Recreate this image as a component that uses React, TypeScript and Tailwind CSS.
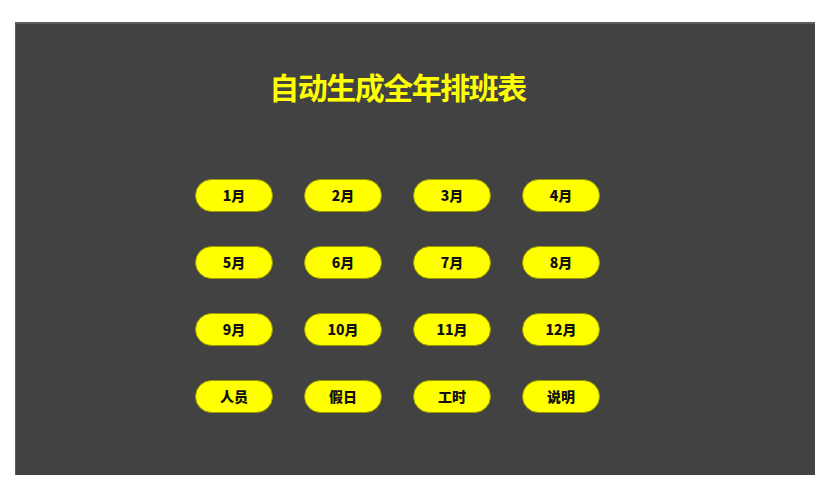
const items = [
  '1月', '2月', '3月', '4月',
  '5月', '6月', '7月', '8月',
  '9月', '10月', '11月', '12月',
  '人员', '假日', '工时', '说明',
]

export default function App() {
  return (
    <div
      className="min-h-[497px] w-full bg-white pt-[22px] pl-[15px]"
      style={{ fontFamily: '"Noto Sans CJK SC", "Noto Sans", sans-serif' }}
    >
      <div className="flex h-[453px] w-[800px] flex-col border-t-2 border-l border-[#5e5e5e] bg-[#424242]">
        <div className="mt-[44px] flex justify-center pr-[36px]">
          <h1 className="text-[30px] font-bold leading-[36px] tracking-[-1.5px] text-[#ffff00]">
            自动生成全年排班表
          </h1>
        </div>
        <div className="mt-[75px] ml-[179px] grid w-fit grid-cols-4 gap-x-[31px] gap-y-[34px]">
          {items.map((label) => (
            <button
              key={label}
              className="flex h-[33px] w-[78px] items-center justify-center rounded-full border border-[#9a9a00] bg-[#ffff00] text-[14px] font-black text-[#111]"
            >
              {label}
            </button>
          ))}
        </div>
      </div>
    </div>
  )
}
